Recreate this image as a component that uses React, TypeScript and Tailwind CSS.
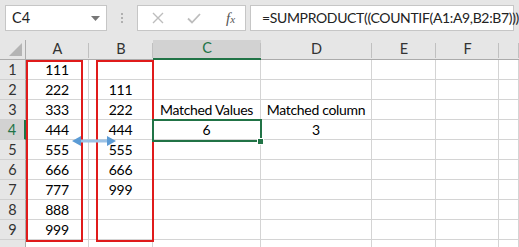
import React from "react";

const font = { fontFamily: "Lato, 'Open Sans', sans-serif" };

const colA = ["111", "222", "333", "444", "555", "666", "777", "888", "999", ""];
const colB = ["", "111", "222", "444", "555", "666", "999", "", "", ""];
const headers = ["A", "B", "C", "D", "E", "F", ""];

function cellText(row: number, col: number) {
  if (col === 0) return colA[row];
  if (col === 1) return colB[row];
  if (row === 2 && col === 2) return "Matched Values";
  if (row === 2 && col === 3) return "Matched column";
  if (row === 3 && col === 2) return "6";
  if (row === 3 && col === 3) return "3";
  return "";
}

function FormulaBar() {
  return (
    <div className="h-[40px] bg-[#e6e6e6] flex items-start pt-[5px] pl-[5px] gap-0">
      <div className="w-[102px] h-[26px] bg-white border border-[#c6c6c6] flex items-center justify-between pl-[6px] pr-[6px]">
        <span className="text-[14.5px] text-[#222] leading-none">C4</span>
        <svg width="9" height="5" viewBox="0 0 9 5">
          <path d="M0 0 L9 0 L4.5 5 Z" fill="#777" />
        </svg>
      </div>
      <div className="w-[30px] h-[26px] flex flex-col items-center justify-center gap-[2px]">
        <div className="w-[2px] h-[2px] bg-[#b0b0b0]" />
        <div className="w-[2px] h-[2px] bg-[#b0b0b0]" />
        <div className="w-[2px] h-[2px] bg-[#b0b0b0]" />
      </div>
      <div className="w-[109px] h-[26px] bg-white border border-[#c6c6c6] flex items-center">
        <svg width="12" height="12" viewBox="0 0 12 12" className="ml-[14px]">
          <path d="M1 1 L11 11 M11 1 L1 11" stroke="#bdbdbd" strokeWidth="1.4" fill="none" />
        </svg>
        <svg width="14" height="11" viewBox="0 0 14 11" className="ml-[23px]">
          <path d="M1 5.5 L5 9.5 L13 1" stroke="#bdbdbd" strokeWidth="1.8" fill="none" />
        </svg>
        <span
          className="ml-[25px] text-[15px] italic text-[#555] leading-none"
          style={{ fontFamily: "'Liberation Serif', serif" }}
        >
          f<span className="text-[11px]">x</span>
        </span>
      </div>
      <div className="ml-[4px] w-[264px] h-[26px] bg-white border border-[#c6c6c6] flex items-center pl-[11px]">
        <span className="text-[14px] tracking-[-0.35px] text-[#222] leading-none whitespace-nowrap">
          =SUMPRODUCT((COUNTIF(A1:A9,B2:B7)))
        </span>
      </div>
    </div>
  );
}

export default function App() {
  return (
    <div className="w-[519px] h-[247px] overflow-hidden bg-white relative" style={font}>
      <FormulaBar />
      <div className="grid grid-cols-[26px_63px_64px_108px_111px_64px_63px_1fr] auto-rows-[20px]">
        <div className="bg-[#e6e6e6] border-r border-b border-[#ababab] relative">
          <svg width="13" height="13" viewBox="0 0 13 13" className="absolute right-[3px] bottom-[3px]">
            <path d="M13 0 L13 13 L0 13 Z" fill="#b4b4b4" />
          </svg>
        </div>
        {headers.map((h, i) => (
          <div
            key={h + i}
            className={`flex items-end justify-center pb-[1px] text-[14.5px] leading-[18px] relative ${
              i === 2
                ? "bg-[#d2d2d2] text-[#217346] border-b-2 border-[#217346]"
                : "bg-[#e6e6e6] text-[#333] border-b border-[#ababab]"
            }`}
          >
            <span className="absolute right-0 top-[3px] bottom-[1px] w-px bg-[#c0c0c0]" />
            {h}
          </div>
        ))}
        {Array.from({ length: 10 }).map((_, r) => (
          <React.Fragment key={r}>
            <div
              className={`flex items-end justify-center text-[14.5px] leading-[19px] border-b border-[#d0d0d0] ${
                r === 3
                  ? "bg-[#d2d2d2] text-[#217346] border-r-2 border-r-[#217346]"
                  : "bg-[#e6e6e6] text-[#333] border-r border-r-[#ababab]"
              }`}
            >
              {r < 9 ? r + 1 : ""}
            </div>
            {headers.map((_, c) => (
              <div
                key={c}
                className="border-r border-b border-[#d4d4d4] flex items-end justify-center text-[14px] tracking-[-0.3px] leading-[19px] text-black whitespace-nowrap"
              >
                {cellText(r, c)}
              </div>
            ))}
          </React.Fragment>
        ))}
      </div>

      {/* annotations */}
      <div className="absolute left-[26px] top-[60px] w-[57px] h-[182px] border-2 border-[#e01b1b]" />
      <div className="absolute left-[96px] top-[60px] w-[58px] h-[182px] border-2 border-[#e01b1b]" />
      <svg className="absolute left-[72px] top-[135px]" width="44" height="12" viewBox="0 0 44 12">
        <path d="M6 6 L38 6" stroke="#9dc3e6" strokeWidth="3" />
        <path d="M0 6 L9 1 L9 11 Z" fill="#5b9bd5" />
        <path d="M44 6 L35 1 L35 11 Z" fill="#5b9bd5" />
      </svg>

      {/* selection */}
      <div className="absolute left-[152px] top-[119px] w-[110px] h-[23px] border-2 border-[#217346]" />
      <div className="absolute left-[257px] top-[138px] w-[7px] h-[7px] bg-[#217346] border border-white" />
    </div>
  );
}
